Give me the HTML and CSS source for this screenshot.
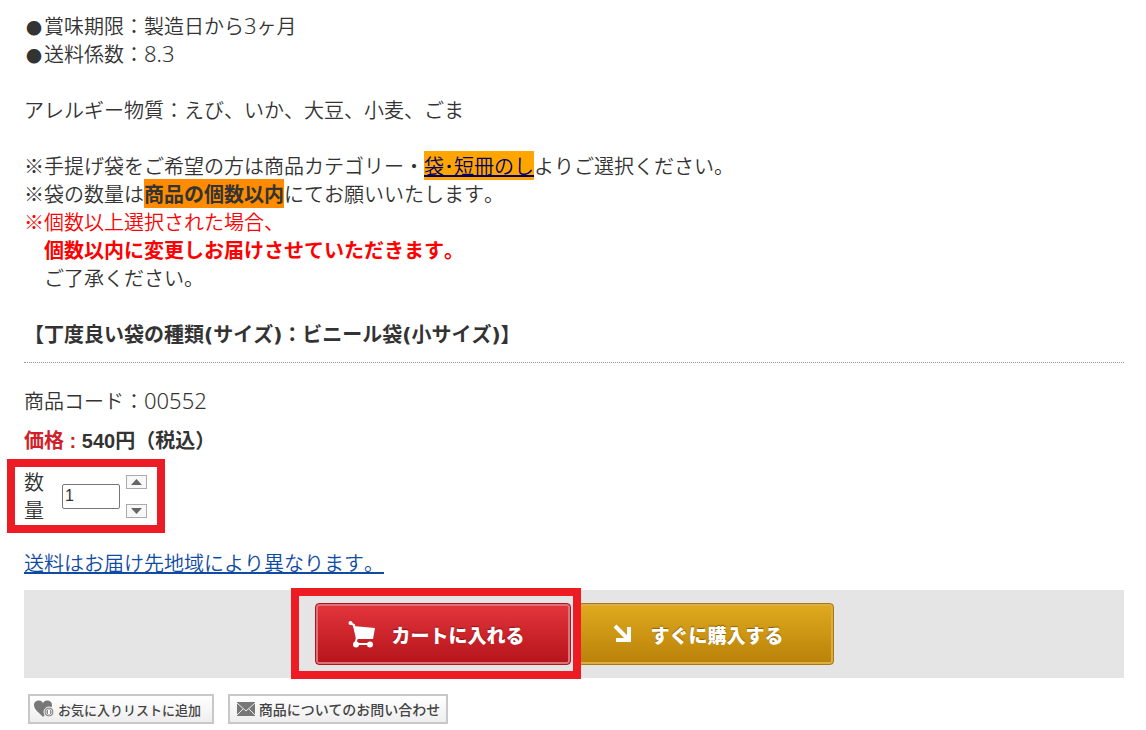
FILE: index.html
```
<!DOCTYPE html>
<html lang="ja">

<head>
    <meta charset="utf-8">
    <title>商品詳細</title>
    <link rel="stylesheet" href="styles.css">
</head>

<body>

    <div class="comment">
        <span class="bullet">●</span>賞味期限：製造日から<span class="num">3</span>ヶ月<br>
        <span class="bullet">●</span>送料係数：<span class="num">8.3</span><br>
        <br>
        アレルギー物質：えび、いか、大豆、小麦、ごま<br>
        <br>
        ※手提げ袋をご希望の方は商品カテゴリー・<a href="#" class="bag-link">袋･短冊のし</a>よりご選択ください。<br>
        ※袋の数量は<strong class="limit">商品の個数以内</strong>にてお願いいたします。<br>
        <span class="warn">※個数以上選択された場合、<br>
        <strong>　個数以内に変更しお届けさせていただきます。</strong></span><br>
        　ご了承ください。<br>
        <br>
        <strong>【丁度良い袋の種類<span class="paren">(</span>サイズ<span class="paren">)</span>：ビニール袋<span class="paren">(</span>小サイズ<span class="paren">)</span>】</strong>
    </div>

    <form class="detail" action="#">
        <p class="code">商品コード：<span class="num">00552</span></p>
        <p class="price"><span class="price-label">価格 :</span> 540円（税込）</p>

        <div class="quantity framed">
            <label for="qty">数量</label>
            <input type="text" id="qty" value="1">
            <div class="spin">
                <button type="button" aria-label="増やす"><svg width="11" height="6" viewBox="0 0 11 6"><path d="M0 6L5.500 0L11 6Z" fill="#666"/></svg></button>
                <button type="button" aria-label="減らす"><svg width="11" height="6" viewBox="0 0 11 6"><path d="M0 0H11L5.500 6Z" fill="#666"/></svg></button>
            </div>
        </div>

        <p class="postage"><a href="#">送料はお届け先地域により異なります。</a></p>

        <div class="cart-area">
            <div class="framed cart-frame">
                <button type="submit" class="btn btn-cart">
                    <svg width="28" height="28" viewBox="0 0 28 28">
                        <path d="M2 3L6 5L9 19" fill="none" stroke="#fff" stroke-width="2"/>
                        <path d="M5 6L27 8L25 19L9 19Z" fill="#fff"/>
                        <path d="M9 18L7 24H23" fill="none" stroke="#fff" stroke-width="2"/>
                        <circle cx="2.500" cy="3" r="2" fill="#fff"/>
                        <circle cx="8" cy="24.500" r="3" fill="#fff"/>
                        <circle cx="22" cy="24.500" r="3" fill="#fff"/>
                    </svg>
                    カートに入れる
                </button>
            </div>
            <button type="submit" class="btn btn-buy">
                <svg width="20" height="20" viewBox="0 0 20 20">
                    <path d="M4 2L16 14M5 16H18V3" fill="none" stroke="#fff" stroke-width="4"/>
                </svg>
                すぐに購入する
            </button>
        </div>

        <div class="sub-buttons">
            <button type="button" class="sub sub-favorite">
                <svg width="22" height="20" viewBox="0 0 22 20">
                    <path d="M10 18C7 14 1 11 1 6C1 1 8 0 10 4C12 0 19 1 19 6C19 11 13 14 10 18Z" fill="#777"/>
                    <circle cx="16" cy="13" r="5" fill="#888" stroke="#f8f8f8"/>
                    <circle cx="16" cy="13" r="3" fill="none" stroke="#ddd"/>
                    <path d="M16 11V15" stroke="#fff" stroke-width="2"/>
                </svg>
                お気に入りリストに追加
            </button>
            <button type="button" class="sub sub-contact">
                <svg width="20" height="16" viewBox="0 0 20 16">
                    <path d="M1 1H19V15H1Z" fill="#777"/>
                    <path d="M1 2L10 10L19 2M1 14L7 8M19 14L13 8" fill="none" stroke="#eee"/>
                </svg>
                商品についてのお問い合わせ
            </button>
        </div>
    </form>

</body>

</html>
```
FILE: styles.css
```
body {
    margin: 0;
    padding: 12px 22px 6px 24px;
    background-color: #fff;
    color: #333;
    font-family: "Noto Sans CJK JP", sans-serif;
    font-size: 20px;
    font-weight: 350;
    font-kerning: none;
    line-height: 28px;
    text-spacing-trim: space-all;
}

p {
    margin: 0;
}

strong {
    font-weight: bold;
}

button,
input {
    box-sizing: border-box;
    margin: 0;
    font-family: inherit;
}

button {
    display: flex;
    align-items: center;
    justify-content: center;
    padding: 0;
    white-space: nowrap;
    cursor: pointer;
}

.num {
    font-family: "Noto Sans", sans-serif;
    font-size: 22px;
    font-weight: 300;
    line-height: 1;
}

.paren {
    font-family: "DejaVu Sans", sans-serif;
    line-height: 1;
}

.bullet {
    display: inline-block;
    width: 20px;
    font-size: 16px;
    line-height: 1;
    text-align: center;
}

.comment {
    padding-bottom: 14px;
    border-bottom: 1px dotted #999;
}

.bag-link {
    background-color: orange;
    color: #006;
}

.limit {
    background-color: darkorange;
}

.warn {
    color: red;
}

.detail {
    padding-top: 24px;
}

.price {
    margin-top: 12px;
    font-family: "Liberation Sans", "Noto Sans CJK JP", sans-serif;
    font-weight: bold;
}

.price-label {
    color: #d0212a;
}

/* 赤枠 */
.framed {
    position: relative;
}

.framed::after {
    content: "";
    position: absolute;
    border: 8px solid #ed1c24;
    pointer-events: none;
}

.quantity {
    display: flex;
    align-items: center;
    width: max-content;
    margin-top: 13px;
}

.quantity::after {
    inset: -9px -18px -9px -17px;
}

.quantity label {
    width: 20px;
    margin-right: 18px;
}

.quantity input {
    width: 58px;
    height: 25px;
    padding: 0 2px;
    border: 1px solid #767676;
    border-radius: 2px;
    color: #333;
    font-family: "Liberation Sans", sans-serif;
    font-size: 16px;
}

.spin {
    display: grid;
    gap: 15px;
    margin-left: 6px;
}

.spin button {
    width: 21px;
    height: 14px;
    border: 1px solid #aaa;
    background-color: #f8f8f8;
}

.postage {
    margin-top: 25px;
}

.postage a {
    color: #104ba3;
}

.cart-area {
    display: flex;
    justify-content: center;
    gap: 7px;
    margin-top: 13px;
    padding: 13px 0;
    background-color: #e5e5e5;
}

.cart-frame {
    z-index: 1;
}

.cart-frame::after {
    inset: -15px -10px -14px -24px;
}

.btn {
    justify-content: flex-start;
    width: 256px;
    height: 62px;
    padding-left: 32px;
    border-radius: 4px;
    color: #fff;
    font-size: 19px;
    font-weight: 900;
}

.btn-cart {
    gap: 16px;
    border: 1px solid #b3131c;
    background: linear-gradient(#e4353c, #b5141b);
    box-shadow: inset 0 0 0 2px #de727a;
    text-shadow: 0 -1px 1px #8c0d14;
}

.btn-buy {
    gap: 20px;
    border: 1px solid #a87812;
    background: linear-gradient(#e0aa1f, #b98108);
    box-shadow: inset 0 0 0 2px #dcae45;
    text-shadow: 0 -1px 1px #8a6005;
}

.sub-buttons {
    display: flex;
    gap: 14px;
    margin-top: 16px;
    padding-left: 4px;
}

.sub {
    gap: 3px;
    height: 30px;
    border: 2px solid #c8c8c8;
    background: linear-gradient(#fff, #eee);
    color: #444;
    font-weight: 500;
}

.sub-favorite {
    justify-content: flex-start;
    width: 186px;
    padding-left: 3px;
    font-size: 13px;
}

.sub-contact {
    width: 220px;
    font-size: 14px;
}
```
